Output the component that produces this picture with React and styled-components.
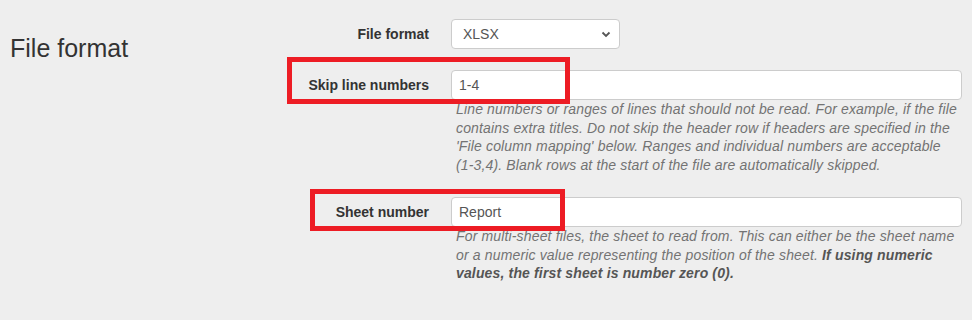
import React from "react";
import styled, { createGlobalStyle } from "styled-components";

const GlobalStyle = createGlobalStyle`
  html, body {
    margin: 0;
    padding: 0;
    background: #eeeeee;
  }
  body {
    font-family: "Liberation Sans", Arial, sans-serif;
    font-size: 14px;
    color: #333333;
  }
`;

const Page = styled.div`
  display: flex;
  width: 972px;
  height: 320px;
  box-sizing: border-box;
`;

const Aside = styled.div`
  width: 290px;
  flex-shrink: 0;
  padding-left: 10px;
  box-sizing: border-box;
`;

const Title = styled.h2`
  margin: 35px 0 0;
  font-size: 25px;
  font-weight: 400;
  line-height: 1.1;
  color: #333333;
`;

const Form = styled.div`
  display: flex;
  flex-direction: column;
  gap: 21px;
  padding-top: 19px;
`;

const Row = styled.div`
  position: relative;
  display: grid;
  grid-template-columns: 139px 511px;
  column-gap: 22px;
  align-items: start;
`;

const Label = styled.label`
  grid-column: 1;
  text-align: right;
  font-weight: 700;
  font-size: 14px;
  line-height: 30px;
  color: #333333;
`;

const Control = styled.div`
  grid-column: 2;
  display: flex;
  flex-direction: column;
`;

const SelectBox = styled.div`
  width: 169px;
  height: 30px;
  box-sizing: border-box;
  display: flex;
  align-items: center;
  justify-content: space-between;
  padding: 0 8px 0 11px;
  background: #fff;
  border: 1px solid #cccccc;
  border-radius: 4px;
  color: #555555;
  font-size: 14px;
`;

const Input = styled.div`
  height: 30px;
  box-sizing: border-box;
  display: flex;
  align-items: center;
  padding: 0 7px;
  background: #fff;
  border: 1px solid #cccccc;
  border-radius: 4px;
  color: #555555;
  font-size: 14px;
`;

const Help = styled.p`
  margin: 0 0 1px 5px;
  font-size: 14px;
  font-style: italic;
  letter-spacing: 0.15px;
  line-height: 18.7px;
  color: #737373;

  strong {
    color: #555555;
    font-weight: 700;
  }
`;

const NoWrap = styled.span`
  white-space: nowrap;
`;

const Highlight = styled.div`
  position: absolute;
  left: ${(p) => p.$left}px;
  top: ${(p) => p.$top}px;
  width: ${(p) => p.$width}px;
  height: ${(p) => p.$height}px;
  box-sizing: border-box;
  border: 5px solid #ed1c24;
  pointer-events: none;
`;

const Chevron = () => (
  <svg width="10" height="7" viewBox="0 0 10 7">
    <path d="M1.5 1.5 L5 5 L8.5 1.5" fill="none" stroke="#555" strokeWidth="1.8" />
  </svg>
);

export default function App() {
  return (
    <>
      <GlobalStyle />
      <Page>
        <Aside>
          <Title>File format</Title>
        </Aside>
        <Form>
          <Row>
            <Label>File format</Label>
            <Control>
              <SelectBox>
                <span>XLSX</span>
                <Chevron />
              </SelectBox>
            </Control>
          </Row>

          <Row>
            <Highlight $left={-3} $top={-13} $width={283} $height={47} />
            <Label>Skip line numbers</Label>
            <Control>
              <Input>1-4</Input>
              <Help>
                Line numbers or ranges of lines that should not be read. For example, if the file
                contains extra titles. Do not skip the header row if headers are specified in the
                'File column mapping' below. Ranges and individual numbers are acceptable{" "}
                <NoWrap>(1-3,4).</NoWrap> Blank rows at the start of the file are automatically
                skipped.
              </Help>
            </Control>
          </Row>

          <Row>
            <Highlight $left={20} $top={-8} $width={255} $height={42} />
            <Label>Sheet number</Label>
            <Control>
              <Input>Report</Input>
              <Help>
                For multi-sheet files, the sheet to read from. This can either be the sheet name
                or a numeric value representing the position of the sheet.{" "}
                <strong>If using numeric values, the first sheet is number zero (0).</strong>
              </Help>
            </Control>
          </Row>
        </Form>
      </Page>
    </>
  );
}
